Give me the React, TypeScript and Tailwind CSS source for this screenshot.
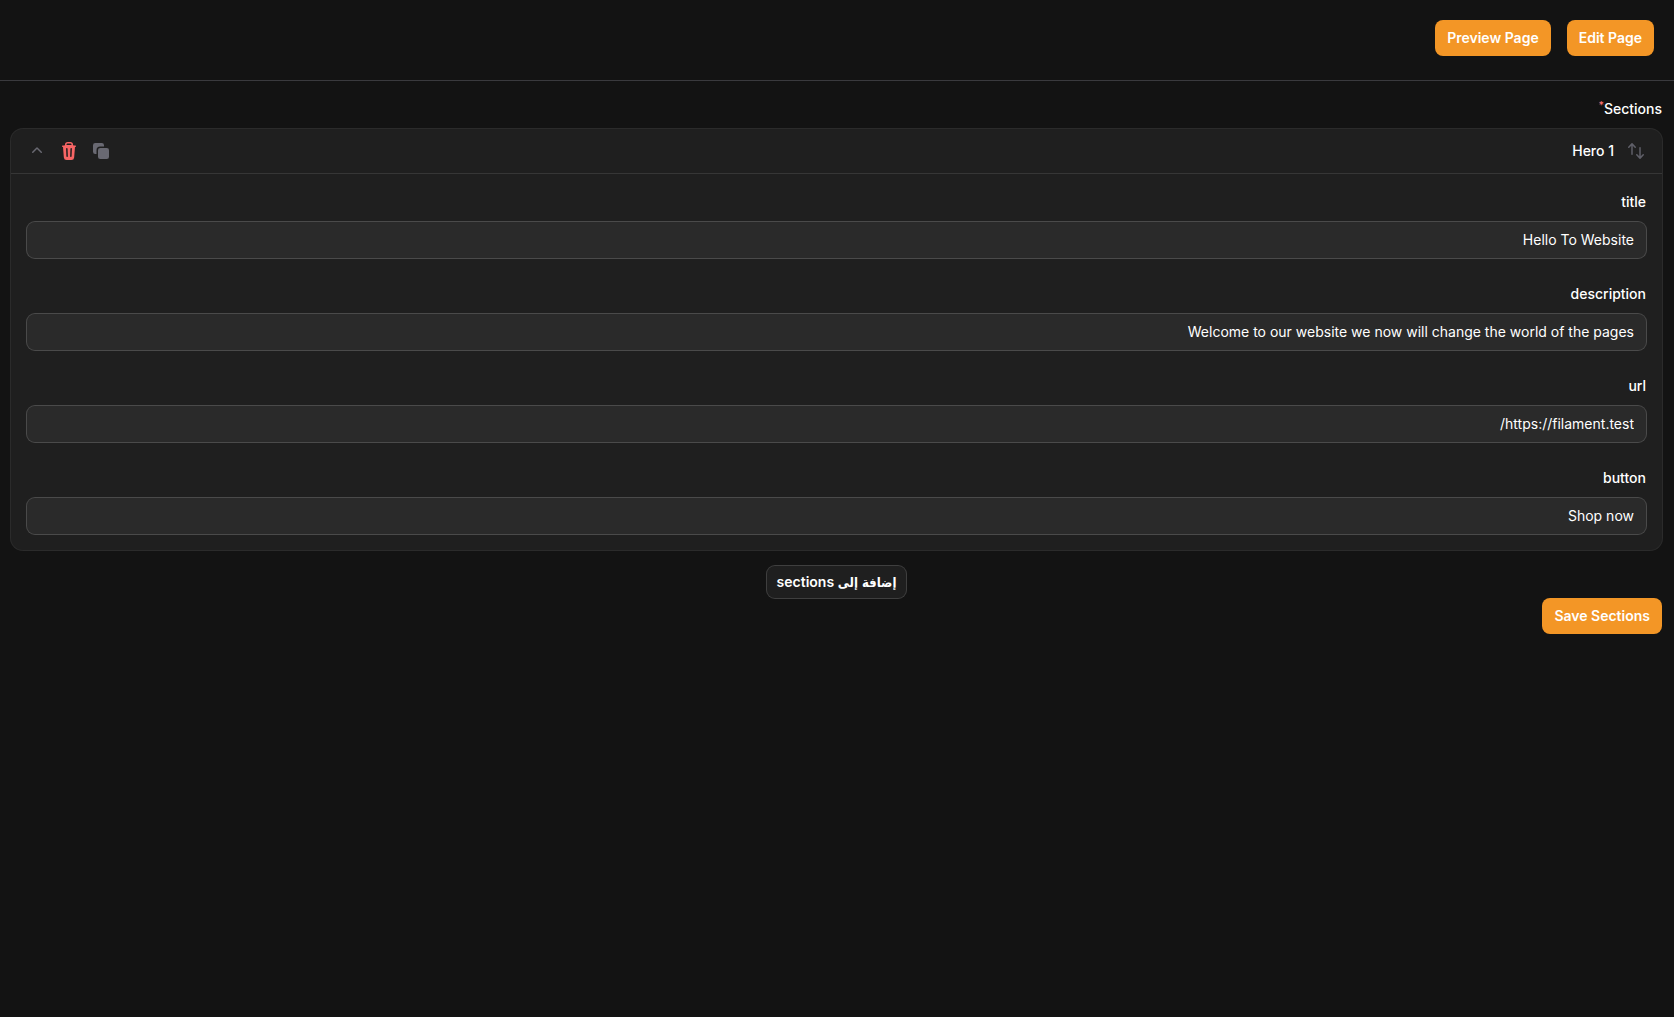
import { useState } from 'react';
import {
  HiMiniArrowsUpDown,
  HiMiniChevronUp,
  HiMiniSquare2Stack,
  HiMiniTrash,
} from 'react-icons/hi2';

const fields = [
  { name: 'title', value: 'Hello To Website' },
  { name: 'description', value: 'Welcome to our website we now will change the world of the pages' },
  { name: 'url', value: 'https://filament.test/' },
  { name: 'button', value: 'Shop now' },
];

const primaryButton = 'h-9 rounded-lg bg-[#f39626] px-3 text-sm font-semibold text-white';

function Field({ name, value }: { name: string; value: string }) {
  const [text, setText] = useState(value);

  return (
    <div className="flex flex-col gap-2">
      <label htmlFor={name} className="text-sm/6 font-medium">{name}</label>
      <input
        id={name}
        type="text"
        value={text}
        onChange={(e) => setText(e.target.value)}
        className="h-9 w-full rounded-lg bg-[#2a2a2a] px-3 pt-1 pb-[6px] text-sm/6 text-white ring-1 ring-[#4a4a4a] outline-none"
      />
    </div>
  );
}

export default function App() {
  return (
    <div dir="rtl" className="min-h-screen bg-[#131313] font-['Inter','Noto_Sans','DejaVu_Sans',sans-serif] text-white antialiased">
      <header className="flex gap-4 border-b border-[#3a3a3e] px-5 pt-5 pb-6">
        <button type="button" className={primaryButton}>Edit Page</button>
        <button type="button" className={primaryButton}>Preview Page</button>
      </header>

      <form className="pt-4 pr-3 pl-[11px]" onSubmit={(e) => e.preventDefault()}>
        <h2 className="mb-2 text-sm/6 font-medium">
          Sections<sup className="font-medium text-[#f87171]">*</sup>
        </h2>

        <section className="rounded-xl bg-[#1f1f1f] ring-1 ring-[#2b2b2b]">
          <div className="flex h-11 items-center gap-3 px-4">
            <button type="button" aria-label="Move" className="text-[#5f5f68]">
              <HiMiniArrowsUpDown className="size-5" />
            </button>
            <h3 className="grow text-sm font-medium">Hero 1</h3>
            <button type="button" aria-label="Clone" className="text-[#696972]">
              <HiMiniSquare2Stack className="size-5" />
            </button>
            <button type="button" aria-label="Delete" className="text-[#f76565]">
              <HiMiniTrash className="size-5" />
            </button>
            <button type="button" aria-label="Collapse" className="text-[#696972]">
              <HiMiniChevronUp className="size-5" />
            </button>
          </div>
          <div className="flex flex-col gap-6 border-t border-[#363636] p-4">
            {fields.map((field) => (
              <Field key={field.name} {...field} />
            ))}
          </div>
        </section>

        <div className="mt-4 flex justify-center">
          <button type="button" className="h-8 rounded-lg bg-[#1f1f1f] px-[10px] text-sm font-semibold ring-1 ring-[#3f3f3f]">
            <span className="font-['DejaVu_Sans_Condensed','DejaVu_Sans',sans-serif] text-[13px]">إضافة إلى</span> sections
          </button>
        </div>
        <button type="submit" className={primaryButton}>Save Sections</button>
      </form>
    </div>
  );
}
